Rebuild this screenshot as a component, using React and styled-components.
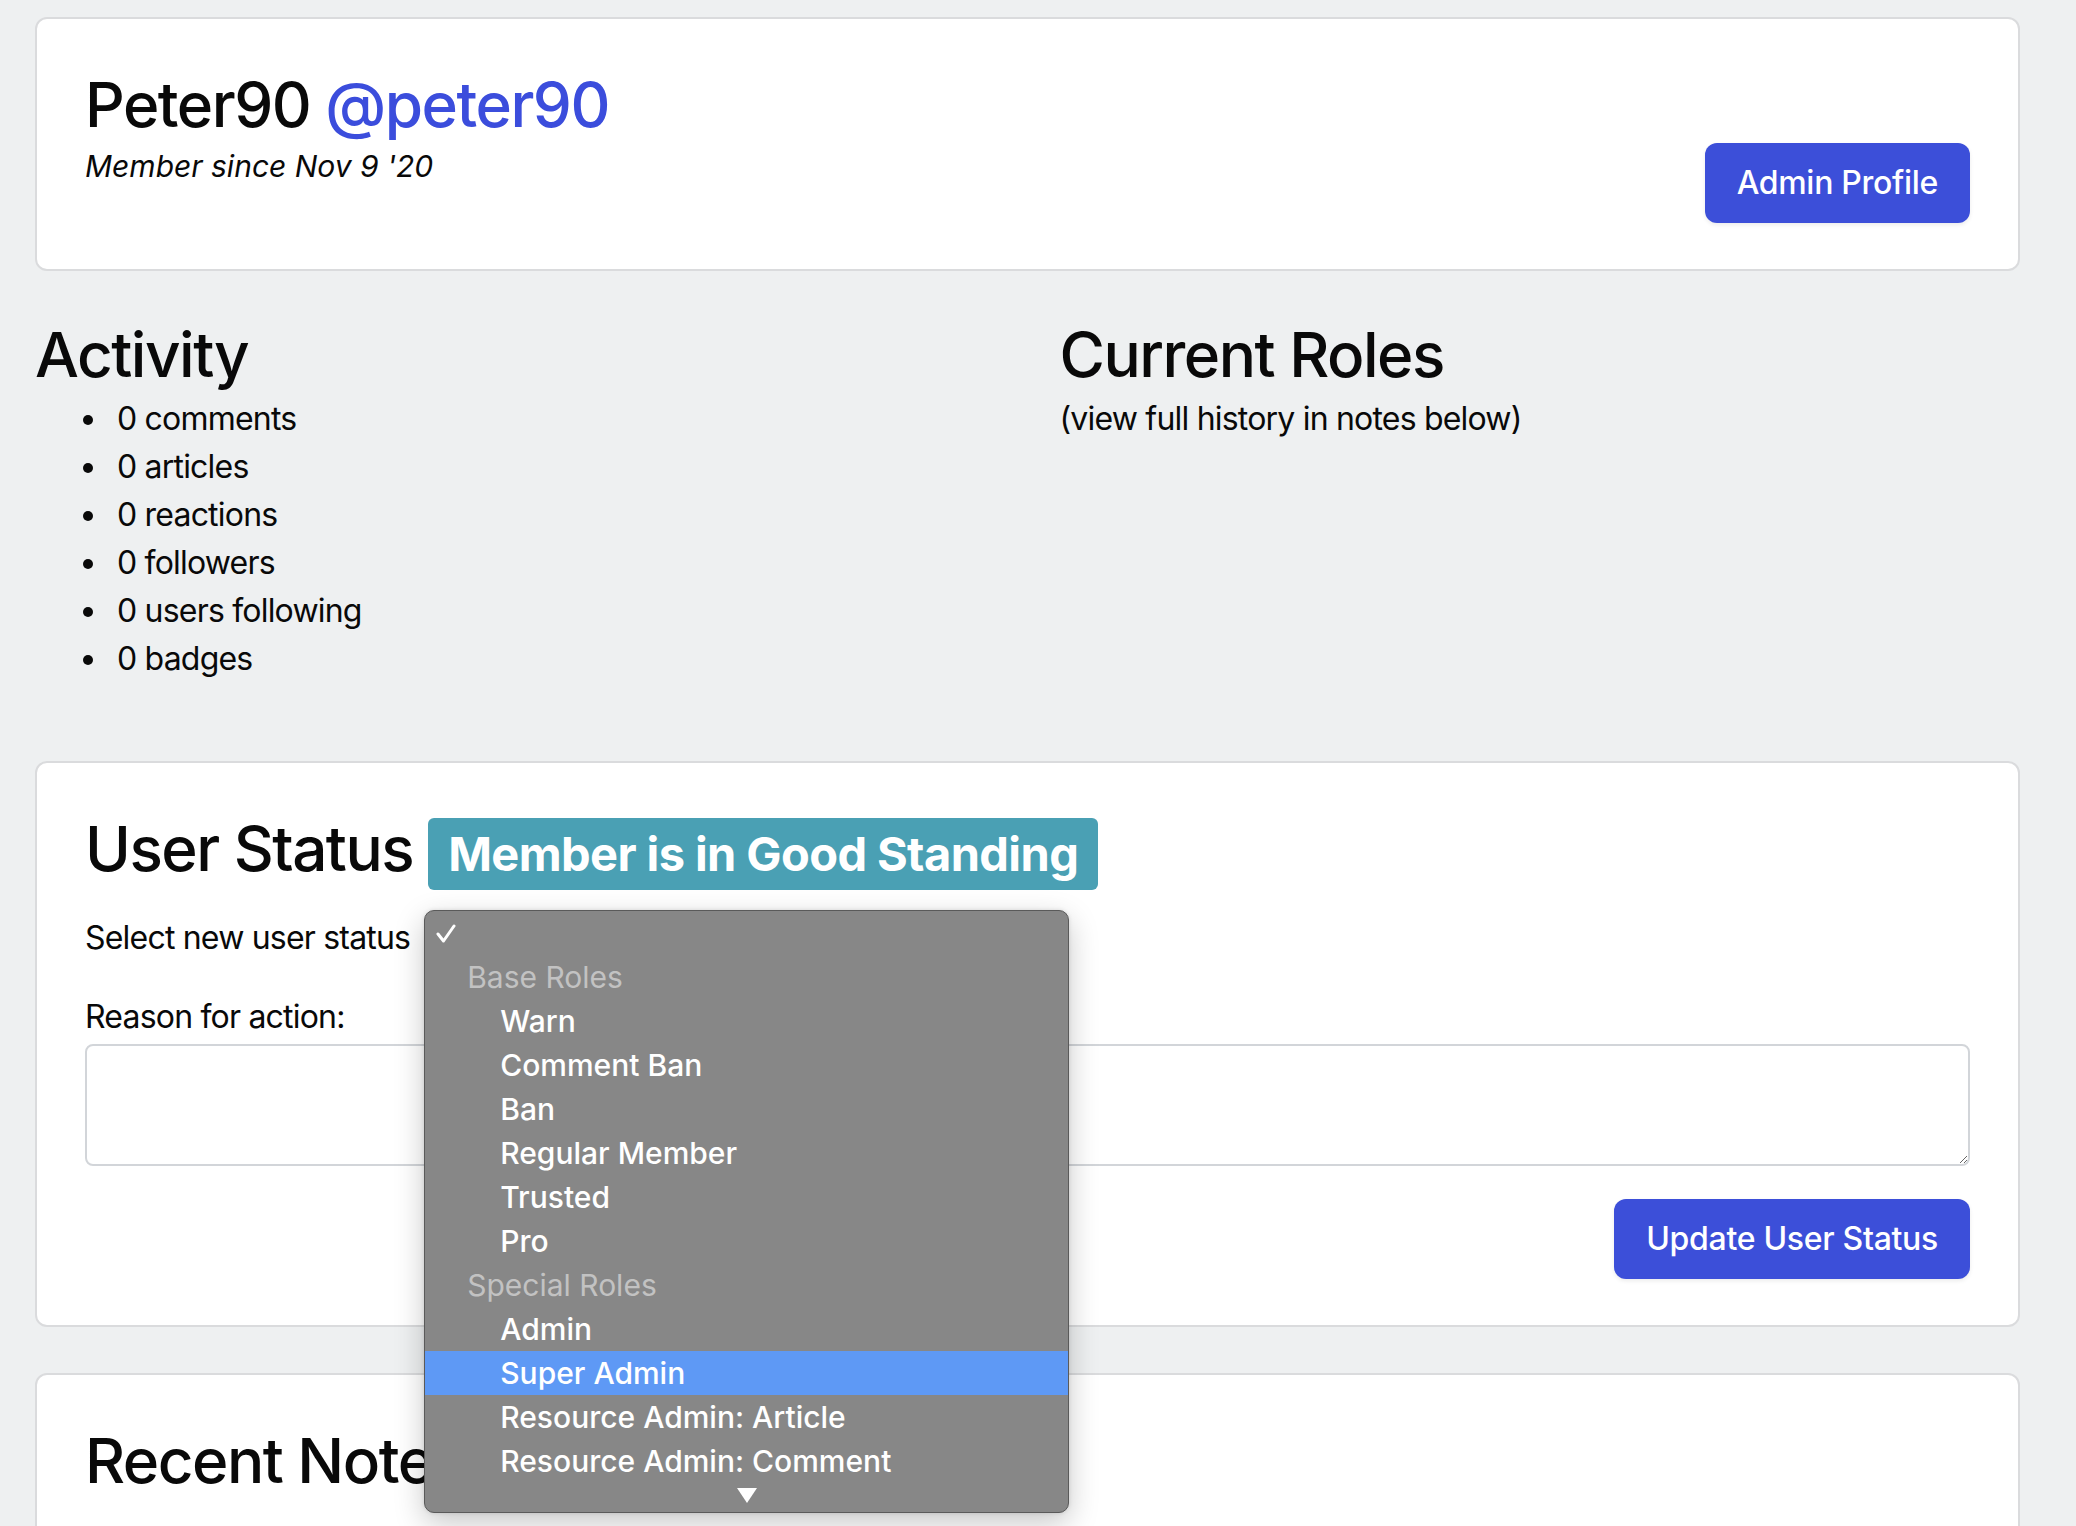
import styled, { createGlobalStyle } from "styled-components";

const GlobalStyle = createGlobalStyle`
  * {
    box-sizing: border-box;
  }

  body {
    margin: 0;
    background: #eef0f1;
    color: #090909;
    font-family: Inter, "Noto Sans", sans-serif;
  }
`;

const Page = styled.main`
  padding: 17px 56px 0 35px;
  height: 1526px;
  overflow: hidden;
`;

const Card = styled.section`
  position: relative;
  background: #fff;
  border: 2px solid #dadbdd;
  border-radius: 12px;
  padding: 46px 48px 46px 48px;
  margin-bottom: ${(p) => p.$gap || 0}px;
`;

const ProfileHeader = styled.div`
  display: flex;
  justify-content: space-between;
  align-items: flex-end;
  min-height: 158px;
`;

const TitleBlock = styled.div`
  align-self: flex-start;
`;

const Heading = styled.h2`
  margin: 0;
  font-size: 62px;
  line-height: 80px;
  font-weight: 500;
  letter-spacing: -1.5px;
`;

const Handle = styled.span`
  color: #3b4ddc;
`;

const MemberSince = styled.p`
  margin: 0;
  font-size: 30px;
  line-height: 42px;
  font-style: italic;
`;

const Button = styled.button`
  border: 0;
  border-radius: 12px;
  background: #3c4fd9;
  color: #fff;
  font-family: inherit;
  font-size: 32px;
  font-weight: 500;
  line-height: 48px;
  letter-spacing: -0.3px;
  padding: 16px 32px;
  box-shadow: 0 2px 4px rgba(0, 0, 0, 0.08);
  cursor: pointer;
`;

const Columns = styled.div`
  display: grid;
  grid-template-columns: 1fr 1fr;
  column-gap: 64px;
  margin: 44px 0 78px;
`;

const BodyText = styled.p`
  margin: 0;
  font-size: 32px;
  line-height: 48px;
  letter-spacing: -0.8px;
`;

const StatList = styled.ul`
  margin: 0;
  padding-left: 75px;
  font-size: 32px;
  line-height: 48px;
  letter-spacing: -0.8px;

  li {
    padding-left: 7px;
  }
`;

const StatusHeader = styled.div`
  display: flex;
  align-items: baseline;
  gap: 15px;
`;

const Badge = styled.span`
  background: #4aa0b4;
  color: #fff;
  font-size: 47px;
  font-weight: 700;
  line-height: 60px;
  padding: 6px 20px;
  border-radius: 6px;
  letter-spacing: -0.6px;
`;

const SelectRow = styled.div`
  display: flex;
  align-items: center;
  gap: 14px;
  margin: 24px 0 31px;
  font-size: 32px;
  line-height: 48px;
  letter-spacing: -0.8px;
`;

const SelectWrap = styled.div`
  position: relative;
`;

const NativeSelect = styled.select`
  font-family: inherit;
  font-size: 28px;
  height: 40px;
  width: 300px;
`;

const Popup = styled.ul`
  position: absolute;
  top: -4px;
  left: 0;
  z-index: 10;
  width: 645px;
  margin: 0;
  padding: 0 0 29px;
  list-style: none;
  background: #878787;
  border: 1px solid #5a5a5a;
  border-radius: 10px;
  box-shadow: 0 10px 30px rgba(0, 0, 0, 0.22), 0 0 4px rgba(0, 0, 0, 0.12);
  overflow: hidden;
  font-size: 30px;
  font-weight: 500;
  letter-spacing: 0;
  color: #fff;
`;

const Option = styled.li`
  height: 44px;
  display: flex;
  align-items: center;
  padding-left: ${(p) => (p.$group ? 42 : p.$check ? 11 : 75)}px;
  color: ${(p) => (p.$group ? "#c2c2c2" : "#fff")};
  font-weight: ${(p) => (p.$group ? 400 : 500)};
  background: ${(p) => (p.$active ? "#5e99f5" : "transparent")};
`;

const MoreArrow = styled.li`
  position: absolute;
  bottom: 9px;
  left: 50%;
  transform: translateX(-50%);
  width: 0;
  height: 0;
  border-left: 10px solid transparent;
  border-right: 10px solid transparent;
  border-top: 15px solid #fff;
`;

const Label = styled.label`
  display: block;
  font-size: 32px;
  line-height: 48px;
  letter-spacing: -0.8px;
  margin-bottom: 3px;
`;

const TextArea = styled.textarea`
  display: block;
  width: 100%;
  height: 122px;
  border: 2px solid #d2d5d9;
  border-radius: 8px;
  font-family: inherit;
  font-size: 32px;
  padding: 12px 16px;
  resize: vertical;
`;

const Actions = styled.div`
  display: flex;
  justify-content: flex-end;
  margin-top: 33px;
`;

const NotesCard = styled(Card)`
  min-height: 400px;
`;

const stats = [
  "0 comments",
  "0 articles",
  "0 reactions",
  "0 followers",
  "0 users following",
  "0 badges",
];

const roleOptions = [
  { label: "Base Roles", group: true },
  { label: "Warn" },
  { label: "Comment Ban" },
  { label: "Ban" },
  { label: "Regular Member" },
  { label: "Trusted" },
  { label: "Pro" },
  { label: "Special Roles", group: true },
  { label: "Admin" },
  { label: "Super Admin", active: true },
  { label: "Resource Admin: Article" },
  { label: "Resource Admin: Comment" },
];

function CheckMark() {
  return (
    <svg width="20" height="19" viewBox="0 0 20 19">
      <polyline
        points="2,10 7.5,17 18,2"
        fill="none"
        stroke="#fff"
        strokeWidth="3"
        strokeLinecap="round"
        strokeLinejoin="round"
      />
    </svg>
  );
}

export default function App() {
  return (
    <>
      <GlobalStyle />
      <Page>
        <Card>
          <ProfileHeader>
            <TitleBlock>
              <Heading>
                Peter90 <Handle>@peter90</Handle>
              </Heading>
              <MemberSince>Member since Nov 9 '20</MemberSince>
            </TitleBlock>
            <Button>Admin Profile</Button>
          </ProfileHeader>
        </Card>

        <Columns>
          <div>
            <Heading>Activity</Heading>
            <StatList>
              {stats.map((s) => (
                <li key={s}>{s}</li>
              ))}
            </StatList>
          </div>
          <div>
            <Heading>Current Roles</Heading>
            <BodyText>(view full history in notes below)</BodyText>
          </div>
        </Columns>

        <Card $gap={46}>
          <StatusHeader>
            <Heading>User Status</Heading>
            <Badge>Member is in Good Standing</Badge>
          </StatusHeader>

          <SelectRow>
            <span>Select new user status</span>
            <SelectWrap>
              <NativeSelect defaultValue="">
                <option value=""></option>
              </NativeSelect>
              <Popup>
                <Option $check>
                  <CheckMark />
                </Option>
                {roleOptions.map((o) => (
                  <Option key={o.label} $group={o.group} $active={o.active}>
                    {o.label}
                  </Option>
                ))}
                <MoreArrow />
              </Popup>
            </SelectWrap>
          </SelectRow>

          <Label htmlFor="reason">Reason for action:</Label>
          <TextArea id="reason" />
          <Actions>
            <Button>Update User Status</Button>
          </Actions>
        </Card>

        <NotesCard>
          <Heading>Recent Notes</Heading>
        </NotesCard>
      </Page>
    </>
  );
}
